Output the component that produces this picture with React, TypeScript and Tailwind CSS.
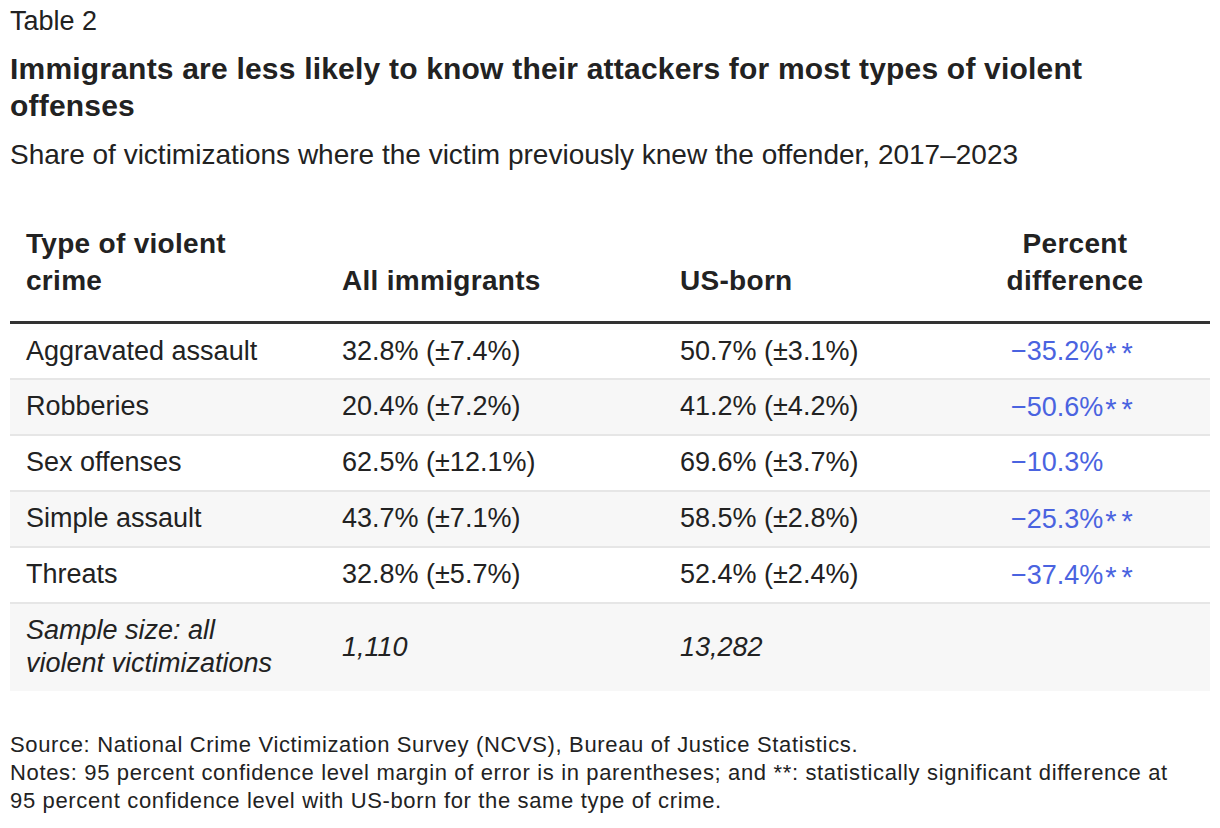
import React from "react";

const rows = [
  ["Aggravated assault", "32.8% (±7.4%)", "50.7% (±3.1%)", "−35.2%", true],
  ["Robberies", "20.4% (±7.2%)", "41.2% (±4.2%)", "−50.6%", true],
  ["Sex offenses", "62.5% (±12.1%)", "69.6% (±3.7%)", "−10.3%", false],
  ["Simple assault", "43.7% (±7.1%)", "58.5% (±2.8%)", "−25.3%", true],
  ["Threats", "32.8% (±5.7%)", "52.4% (±2.4%)", "−37.4%", true],
] as const;

export default function App() {
  return (
    <div
      className="w-[1220px] h-[828px] bg-white text-[#222] overflow-hidden"
      style={{ fontFamily: '"Liberation Sans", Arial, sans-serif' }}
    >
      <div className="px-[10px] pt-[4px]">
        <div className="text-[27px] leading-[34px]">Table 2</div>
        <h1 className="mt-[12px] text-[30px] leading-[37px] font-bold tracking-[0.2px] w-[1140px]">
          Immigrants are less likely to know their attackers for most types of violent offenses
        </h1>
        <div className="mt-[14px] text-[28px] leading-[34px]">
          Share of victimizations where the victim previously knew the offender, 2017–2023
        </div>
      </div>

      <table className="mt-[53px] ml-[10px] w-[1200px] border-collapse table-fixed">
        <colgroup>
          <col className="w-[316px]" />
          <col className="w-[338px]" />
          <col className="w-[276px]" />
          <col className="w-[270px]" />
        </colgroup>
        <thead>
          <tr className="border-b-[3px] border-[#333]">
            <th className="text-left align-bottom font-bold text-[28px] leading-[37px] tracking-[0.3px] pl-[16px] pb-[22px] pt-0">
              Type of violent
              <br />
              crime
            </th>
            <th className="text-left align-bottom font-bold text-[28px] leading-[37px] tracking-[0.3px] pl-[16px] pb-[22px]">
              All immigrants
            </th>
            <th className="text-left align-bottom font-bold text-[28px] leading-[37px] tracking-[0.3px] pl-[16px] pb-[22px]">
              US-born
            </th>
            <th className="text-center align-bottom font-bold text-[28px] leading-[37px] tracking-[0.3px] pb-[22px]">
              Percent
              <br />
              difference
            </th>
          </tr>
        </thead>
        <tbody className="text-[27px]">
          {rows.map((r, i) => (
            <tr
              key={r[0]}
              className={`h-[56px] border-b-[2px] border-[#e6e6e6] ${i % 2 === 1 ? "bg-[#f7f7f7]" : "bg-white"}`}
            >
              <td className="pl-[16px] align-middle">{r[0]}</td>
              <td className="pl-[16px] align-middle">{r[1]}</td>
              <td className="pl-[16px] align-middle">{r[2]}</td>
              <td className="align-middle text-[#4a63e0] pl-[71px]">
                {r[3]}
                {r[4] ? (
                  <span className="relative top-[3px] ml-[2px] tracking-[5px] text-[29px]">**</span>
                ) : null}
              </td>
            </tr>
          ))}
          <tr className="h-[88px] bg-[#f7f7f7] italic">
            <td className="pl-[16px] leading-[33px] align-middle">
              Sample size: all
              <br />
              violent victimizations
            </td>
            <td className="pl-[16px] align-middle">1,110</td>
            <td className="pl-[16px] align-middle">13,282</td>
            <td></td>
          </tr>
        </tbody>
      </table>

      <div className="ml-[10px] w-[1175px] mt-[40px] text-[22px] leading-[28px] tracking-[0.65px]">
        <div>Source: National Crime Victimization Survey (NCVS), Bureau of Justice Statistics.</div>
        <div>
          Notes: 95 percent confidence level margin of error is in parentheses; and **: statistically significant difference at 95 percent confidence level with US-born for the same type of crime.
        </div>
      </div>
    </div>
  );
}
